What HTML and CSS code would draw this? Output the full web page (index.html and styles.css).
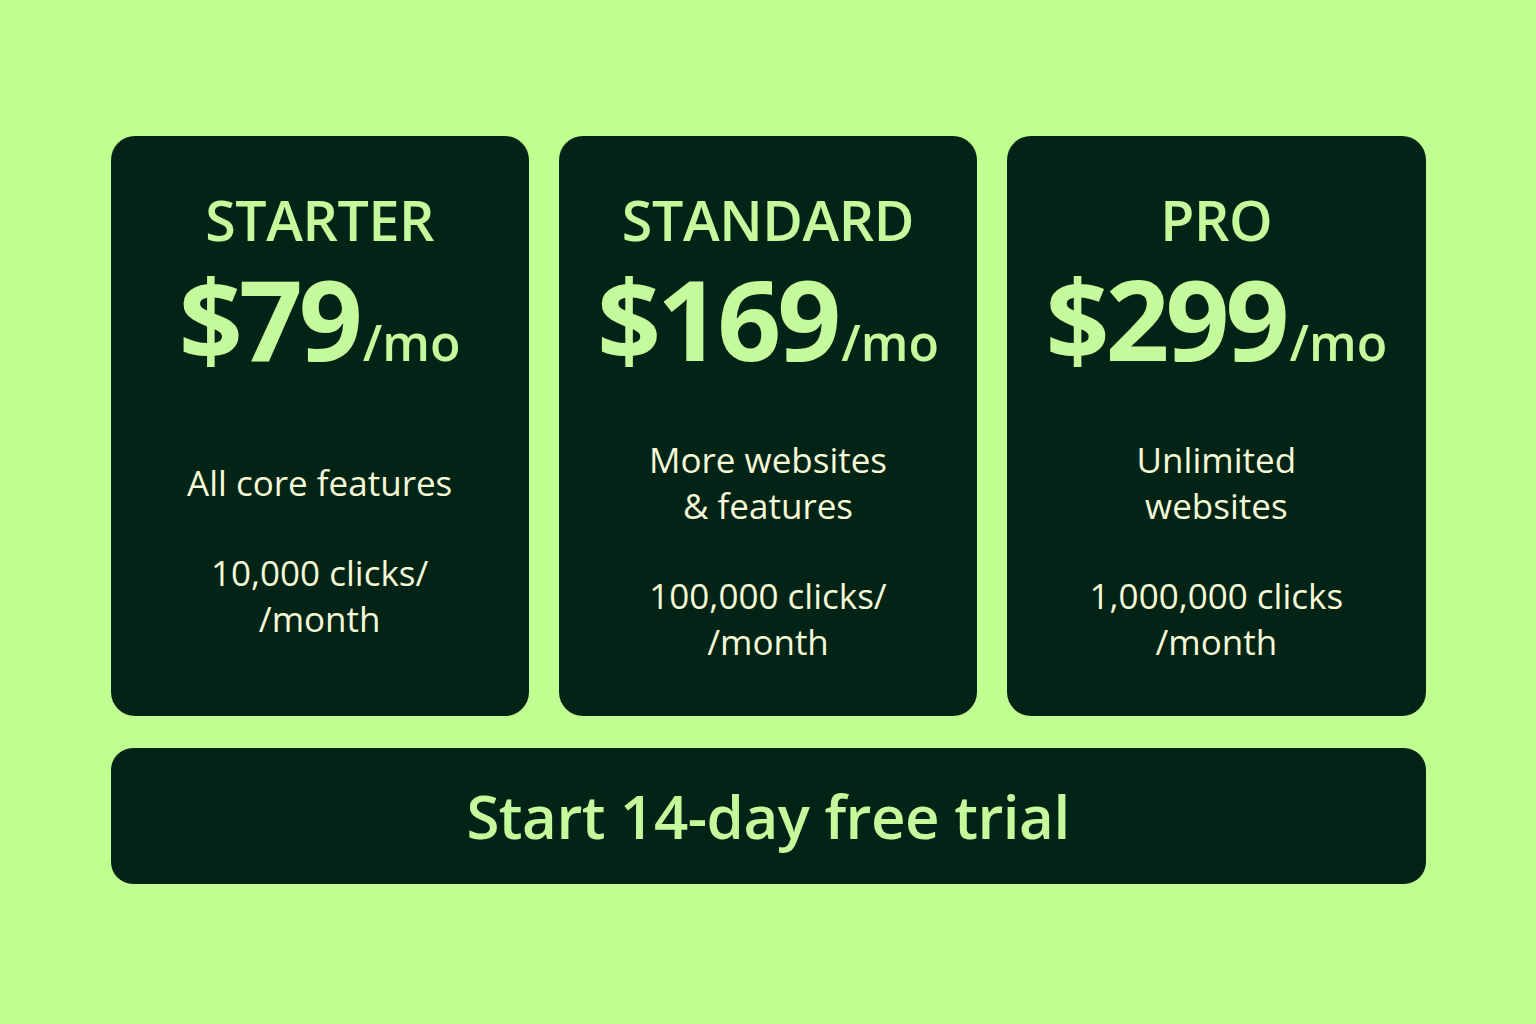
FILE: index.html
```html
<!DOCTYPE html>
<html lang="en">
<head>
<meta charset="utf-8">
<title>Pricing</title>
<link rel="stylesheet" href="styles.css">
</head>
<body>
<main class="pricing">
  <section class="plans">
    <article class="card">
      <h2 class="plan-name">STARTER</h2>
      <p class="price"><span class="amount">$79</span><span class="per">/mo</span></p>
      <div class="details">
        <p class="feature">All core features</p>
        <p class="clicks">10,000 clicks/<br>/month</p>
      </div>
    </article>
    <article class="card">
      <h2 class="plan-name">STANDARD</h2>
      <p class="price"><span class="amount">$169</span><span class="per">/mo</span></p>
      <div class="details">
        <p class="feature">More websites<br>&amp; features</p>
        <p class="clicks">100,000 clicks/<br>/month</p>
      </div>
    </article>
    <article class="card">
      <h2 class="plan-name">PRO</h2>
      <p class="price"><span class="amount">$299</span><span class="per">/mo</span></p>
      <div class="details">
        <p class="feature">Unlimited<br>websites</p>
        <p class="clicks">1,000,000 clicks<br>/month</p>
      </div>
    </article>
  </section>
  <button class="trial">Start 14-day free trial</button>
</main>
</body>
</html>
```

FILE: styles.css
```css
* { box-sizing: border-box; }
html, body {
  margin: 0;
  padding: 0;
  background: #c1fe92;
  font-family: "Open Sans", "Noto Sans", sans-serif;
}
.pricing {
  width: 1315px;
  margin: 136px auto 0;
  display: flex;
  flex-direction: column;
  gap: 32px;
}
.plans {
  display: grid;
  grid-template-columns: repeat(3, 1fr);
  gap: 30px;
}
.card {
  background: #012417;
  border-radius: 24px;
  height: 580px;
  display: flex;
  flex-direction: column;
  align-items: center;
  text-align: center;
  padding-top: 52px;
  color: #c4fa9c;
}
.plan-name {
  margin: 0;
  font-size: 55.5px;
  font-weight: 600;
  line-height: 64px;
  letter-spacing: -0.4px;
}
.price {
  margin: 6px 0 0;
  line-height: 120px;
  white-space: nowrap;
}
.amount {
  font-size: 112px;
  font-weight: 700;
  letter-spacing: -4px;
}
.per {
  font-size: 50px;
  font-weight: 600;
  margin-left: 4px;
}
.details {
  flex: 1;
  display: flex;
  flex-direction: column;
  justify-content: center;
  gap: 44px;
  color: #f6f8d6;
  font-size: 35px;
  font-weight: 500;
  line-height: 46px;
  padding-bottom: 30px;
}
.details p { margin: 0; }
.trial {
  height: 136px;
  border: 0;
  border-radius: 22px;
  background: #012417;
  color: #c4fa9c;
  font-family: "Open Sans", "Noto Sans", sans-serif;
  font-size: 60px;
  font-weight: 600;
  letter-spacing: -0.5px;
  padding: 0;
  cursor: pointer;
}
```
